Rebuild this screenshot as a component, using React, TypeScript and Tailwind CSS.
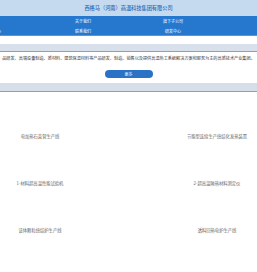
import React from "react";

const nav = ["", "关于我们", "旗下子公司", "新闻中心", "联系我们", "研发中心"];

const products = [
  ["电加热石英管生产线", "节能型连续生产烧结化发热装置"],
  ["1-材料超高温性能试验机", "2-超高温隔热材料测定仪"],
  ["该体颗粒烧结炉生产线", "透料回热电炉生产线"],
];

export default function App() {
  return (
    <div
      className="w-[257px] h-[272px] overflow-hidden bg-white"
      style={{ fontFamily: '"Noto Sans CJK SC", "Noto Sans", sans-serif' }}
    >
      <div className="h-[16px] bg-[#c6daef] flex items-center justify-center">
        <span className="text-[5.2px] leading-none text-[#2a6db5] font-medium">
          西格马（河南）高温科技集团有限公司
        </span>
      </div>
      <div className="h-[20px] bg-[#2678cf] overflow-hidden border-b border-[#5b95d6]">
        <div className="grid grid-cols-[90px_90px_90px] ml-[-52px]">
          {nav.map((n, i) => (
            <div key={i} className="h-[10px] flex items-center justify-center text-[4px] leading-none text-white">
              {n}
            </div>
          ))}
        </div>
      </div>
      <div className="h-[8px]" />
      <div className="h-[8px] bg-[#d8e1eb] border-b border-[#7aa4d4]" />
      <div className="h-[12px] flex items-center justify-center overflow-hidden">
        <p className="whitespace-nowrap text-[4.15px] leading-none text-[#333]">
          品研发、高端设备制造、新材料、建筑保温材料等产品研发、制造、销售以及提供高温热工系统解决方案和服务为主的高新技术产业集团。
        </p>
      </div>
      <div className="flex justify-center pt-[6px]">
        <div className="w-[48px] h-[8px] rounded-full bg-[#2a72c6] flex items-center justify-center text-[4px] leading-none text-white">
          更多
        </div>
      </div>
      <div className="h-[5px]" />
      <div className="h-[9px] bg-[#d6dfe9] border-b border-[#7aa4d4]" />
      <div className="flex flex-col pt-[1px]">
        {products.map(([a, b]) => (
          <div key={a} className="flex justify-between">
            {[a, b].map((t) => (
              <div key={t} className="w-[80px] flex flex-col items-center">
                <div className="h-[40px]" />
                <div className="h-[7px] flex items-center text-[4.3px] leading-none text-[#666] whitespace-nowrap">
                  {t}
                </div>
              </div>
            ))}
          </div>
        ))}
      </div>
    </div>
  );
}
